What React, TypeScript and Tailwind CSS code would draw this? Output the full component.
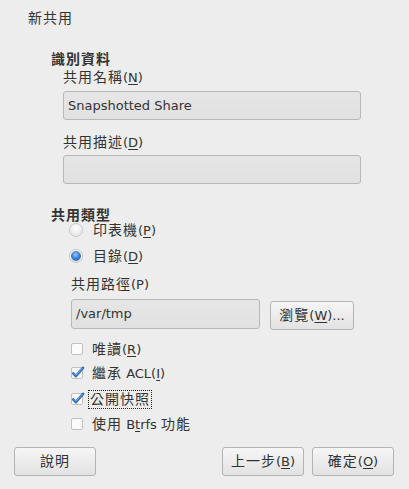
import type { ReactNode } from 'react'

const font = { fontFamily: '"DejaVu Sans", "Noto Sans CJK TC", sans-serif' }

// CJK runs render a bit wider than the latin text in the dialog
const cjk = (s: string) =>
  s.split(/([\u3000-\u9fff\uff00-\uffef]+)/).map((part, i) =>
    /[\u3000-\u9fff\uff00-\uffef]/.test(part) ? (
      <span key={i} className="text-[14px] tracking-[1px]">
        {part}
      </span>
    ) : (
      part
    )
  )

const Radio = ({ checked }: { checked?: boolean }) => (
  <svg width="14" height="14" viewBox="0 0 14 14" className="shrink-0">
    <defs>
      <radialGradient id="rOff" cx="50%" cy="35%" r="65%">
        <stop offset="0%" stopColor="#ffffff" />
        <stop offset="100%" stopColor="#e4e4e4" />
      </radialGradient>
      <radialGradient id="rOn" cx="45%" cy="35%" r="60%">
        <stop offset="0%" stopColor="#9cc8f5" />
        <stop offset="60%" stopColor="#3d8be0" />
        <stop offset="100%" stopColor="#2f6fc4" />
      </radialGradient>
    </defs>
    <circle cx="7" cy="7" r="6.5" fill="url(#rOff)" stroke="#c8c8c8" />
    {checked && <circle cx="7" cy="7" r="4.6" fill="url(#rOn)" stroke="#2c66b8" strokeWidth="0.6" />}
  </svg>
)

const Check = ({ checked }: { checked?: boolean }) => (
  <svg width="14" height="14" viewBox="0 0 14 14" className="shrink-0 overflow-visible">
    <rect x="0.5" y="1.5" width="11" height="11" rx="1.5" fill="#fbfbfb" stroke="#c0c0c0" />
    {checked && (
      <>
        <path
          d="M2.3 7.3 L4.8 10.2 L12 1.8"
          fill="none"
          stroke="#2f6cc0"
          strokeWidth="2.6"
          strokeLinecap="round"
          strokeLinejoin="round"
        />
        <path d="M3 7.4 L4.8 9.3 L11.2 2.4" fill="none" stroke="#8fbcef" strokeWidth="0.8" strokeLinecap="round" />
      </>
    )}
  </svg>
)

const Btn = ({ children, className = '' }: { children: ReactNode; className?: string }) => (
  <div
    className={`flex h-[29px] w-[82px] items-center justify-center rounded-[3px] border border-[#b4b4b4] bg-gradient-to-b from-[#f6f6f6] to-[#e2e2e2] text-[13px] text-[#333] ${className}`}
  >
    {children}
  </div>
)

const Field = ({ value, className = '' }: { value?: string; className?: string }) => (
  <div
    className={`flex items-center rounded-[3px] border border-[#b8b8b8] bg-gradient-to-b from-[#e6e6e6] to-[#e1e1e1] pl-[4px] text-[13px] text-[#333] ${className}`}
  >
    {value}
  </div>
)

const U = ({ children }: { children: ReactNode }) => (
  <span className="underline decoration-1 underline-offset-2">{children}</span>
)

export default function App() {
  return (
    <div style={font} className="flex h-[489px] w-[409px] flex-col bg-[#ededed] text-[13px] text-[#333]">
      <div className="mt-[9px] h-[18px] pl-[28px] leading-[18px]">{cjk('新共用')}</div>

      <div className="mt-[24px] h-[17px] pl-[51px] font-bold leading-[17px]">{cjk('識別資料')}</div>
      <div className="h-[18px] pl-[63px] leading-[18px]">
        {cjk('共用名稱')}(<U>N</U>)
      </div>
      <Field value="Snapshotted Share" className="ml-[63px] mt-[5px] h-[29px] w-[298px]" />

      <div className="mt-[13px] h-[18px] pl-[63px] leading-[18px]">
        {cjk('共用描述')}(<U>D</U>)
      </div>
      <Field className="ml-[63px] mt-[4px] h-[29px] w-[298px]" />

      <div className="mt-[24px] h-[14px] pl-[51px] font-bold leading-[14px]">{cjk('共用類型')}</div>
      <div className="flex h-[16px] items-center pl-[69px]">
        <Radio />
        <span className="ml-[10px]">
          {cjk('印表機')}(<U>P</U>)
        </span>
      </div>
      <div className="mt-[10px] flex h-[16px] items-center pl-[69px]">
        <Radio checked />
        <span className="ml-[10px]">
          {cjk('目錄')}(<U>D</U>)
        </span>
      </div>

      <div className="mt-[11px] h-[18px] pl-[71px] leading-[18px]">{cjk('共用路徑')}(P)</div>
      <div className="mt-[6px] flex items-start pl-[71px]">
        <Field value="/var/tmp" className="h-[30px] w-[189px]" />
        <Btn className="ml-[10px] mt-[2px] w-[84px]">
          {cjk('瀏覽')}(<U>W</U>)...
        </Btn>
      </div>

      <div className="mt-[9px] flex h-[20px] items-center pl-[71px]">
        <Check />
        <span className="ml-[7px]">
          {cjk('唯讀')}(<U>R</U>)
        </span>
      </div>
      <div className="mt-[4px] flex h-[20px] items-center pl-[71px]">
        <Check checked />
        <span className="ml-[7px]">
          {cjk('繼承')} ACL(<U>I</U>)
        </span>
      </div>
      <div className="mt-[6px] flex h-[20px] items-center pl-[71px]">
        <Check checked />
        <span className="ml-[3px] border border-dotted border-[#222] px-[1px] leading-[16px]">{cjk('公開快照')}</span>
      </div>
      <div className="mt-[5px] flex h-[20px] items-center pl-[71px]">
        <Check />
        <span className="ml-[7px]">
          {cjk('使用')} B<U>t</U>rfs {cjk('功能')}
        </span>
      </div>

      <div className="mt-[13px] flex px-[14px]">
        <Btn>{cjk('說明')}</Btn>
        <div className="ml-auto flex gap-[8px] pr-[1px]">
          <Btn>
            {cjk('上一步')}(<U>B</U>)
          </Btn>
          <Btn>
            {cjk('確定')}(<U>O</U>)
          </Btn>
        </div>
      </div>
    </div>
  )
}
